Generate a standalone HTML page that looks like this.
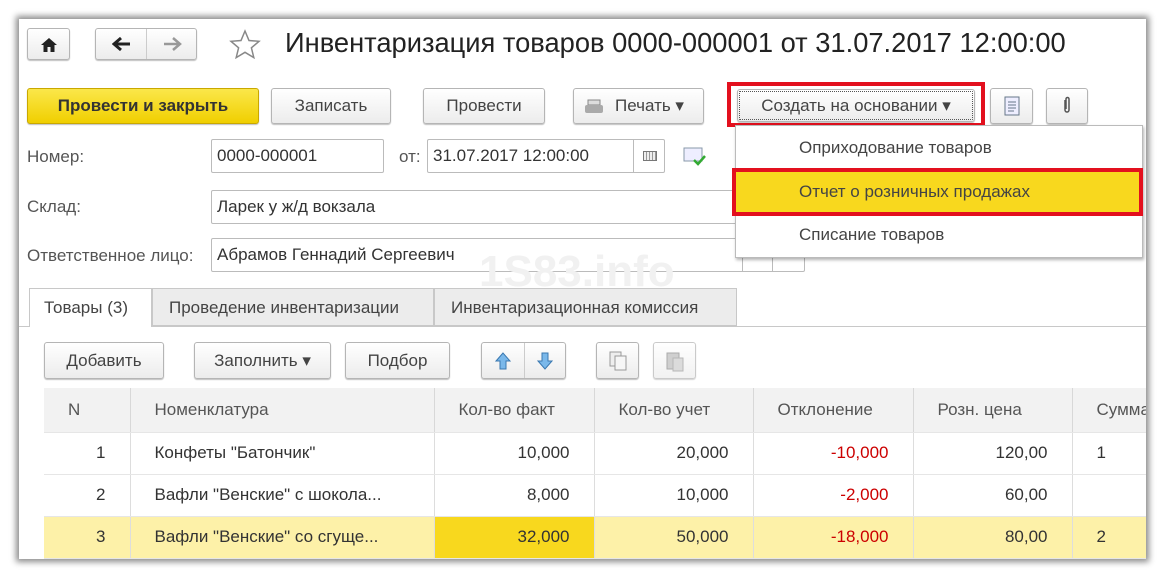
<!DOCTYPE html>
<html><head><meta charset="utf-8"><style>
*{box-sizing:border-box;margin:0;padding:0}
body{width:1165px;height:580px;background:#fff;position:relative;overflow:hidden;font-family:"Liberation Sans",Arial,sans-serif;font-size:17px;color:#333}
.win{position:absolute;left:19px;top:19px;width:1127px;height:540px;background:#fff;box-shadow:0 0 6px 3px rgba(0,0,0,.45);overflow:hidden}
.a{position:absolute}
.btn{position:absolute;border:1px solid #b5b5b5;border-radius:3px;background:linear-gradient(#fff,#ececec);box-shadow:0 1px 1px rgba(0,0,0,.25);text-align:center;color:#444}
.inp{position:absolute;border:1px solid #bbb;border-radius:2px;background:#fff;padding-left:5px;color:#333}
.lbl{position:absolute;color:#555}
table{border-collapse:collapse;position:absolute;left:25px;top:369px;table-layout:fixed;width:1148px}
td{height:42px;border-right:1px solid #ddd;border-bottom:1px solid #e6e6e6;padding:0 24px;white-space:nowrap;overflow:hidden}
tr.h td{background:#f2f2f2;color:#555;border-right:1px solid #d8d8d8;height:44px}
.r{text-align:right}.red{color:#c00}
tr.y td{background:#fdf1a8}
</style></head><body>
<div class="win">
<div class="btn" style="left:8px;top:9px;width:43px;height:32px"><svg width="18" height="16" viewBox="0 0 18 16" style="margin-top:8px"><path d="M9 1L1 8h2.5v7h4v-5h3v5h4V8H17z" fill="#222"/></svg></div>
<div class="btn" style="left:76px;top:9px;width:102px;height:32px"><div class="a" style="left:50px;top:0;width:1px;height:30px;background:#ccc"></div>
<svg class="a" style="left:16px;top:7px" width="20" height="16"><path d="M2 8h16M9 2L2 8l7 6" stroke="#222" stroke-width="3" fill="none"/></svg>
<svg class="a" style="left:66px;top:7px" width="20" height="16"><path d="M2 8h16M11 2l7 6-7 6" stroke="#999" stroke-width="2.5" fill="none"/></svg></div>
<svg class="a" style="left:210px;top:10px" width="32" height="30"><path d="M16 2l4 9.5 10 .8-7.6 6.5 2.4 9.8L16 23.3l-8.8 5.3 2.4-9.8L2 12.3l10-.8z" fill="none" stroke="#888" stroke-width="1.5"/></svg>
<div class="a" style="left:266px;top:8px;font-size:27.3px;color:#222">Инвентаризация товаров 0000-000001 от 31.07.2017 12:00:00</div>
<div class="btn" style="left:8px;top:69px;width:232px;height:36px;background:linear-gradient(#fbe74a,#f0cf00);border-color:#c9a800;color:#333;font-weight:bold;line-height:34px">Провести и закрыть</div>
<div class="btn" style="left:252px;top:69px;width:120px;height:36px;line-height:34px">Записать</div>
<div class="btn" style="left:404px;top:69px;width:122px;height:36px;line-height:34px">Провести</div>
<div class="btn" style="left:554px;top:69px;width:131px;height:36px;line-height:34px;padding-left:22px">Печать ▾<svg class="a" style="left:10px;top:10px" width="20" height="16"><rect x="4" y="1" width="12" height="5" fill="#ddd" stroke="#888"/><rect x="1" y="6" width="18" height="8" rx="2" fill="#aaa"/></svg></div>
<div class="a" style="left:708px;top:63px;width:258px;height:45px;border:4px solid #e3101e"></div>
<div class="btn" style="left:718px;top:70px;width:238px;height:33px;line-height:31px;outline:1px dotted #555;outline-offset:-3px">Создать на основании ▾</div>
<div class="btn" style="left:971px;top:69px;width:43px;height:36px"><svg width="16" height="20" style="margin-top:7px"><rect x="1" y="1" width="14" height="18" fill="#eef" stroke="#678"/><path d="M4 6h8M4 9h8M4 12h8M4 15h6" stroke="#678"/></svg></div>
<div class="btn" style="left:1027px;top:69px;width:42px;height:36px"><svg width="10" height="20" style="margin-top:7px"><path d="M3 4v10a2 2 0 004 0V3a1.3 1.3 0 00-3 0v10" fill="none" stroke="#555" stroke-width="1.5"/></svg></div>
<div class="lbl" style="left:8px;top:128px">Номер:</div>
<div class="inp" style="left:192px;top:120px;width:173px;height:34px;line-height:32px">0000-000001</div>
<div class="lbl" style="left:380px;top:128px">от:</div>
<div class="inp" style="left:408px;top:120px;width:238px;height:34px;line-height:32px">31.07.2017 12:00:00<div class="a" style="left:205px;top:0;width:1px;height:32px;background:#bbb"></div><div class="a" style="left:215px;top:11px;width:14px;height:10px;border:1px solid #777;background:repeating-linear-gradient(90deg,#eee 0 2px,#999 2px 3px)"></div></div>
<svg class="a" style="left:664px;top:128px" width="24" height="20"><rect x="1" y="1" width="18" height="13" fill="#eef" stroke="#89a"/><path d="M11 13l4 4 7-8" stroke="#3a3" stroke-width="2.5" fill="none"/></svg>
<div class="lbl" style="left:8px;top:178px">Склад:</div>
<div class="inp" style="left:192px;top:171px;width:600px;height:34px;line-height:32px">Ларек у ж/д вокзала</div>
<div class="lbl" style="left:8px;top:227px">Ответственное лицо:</div>
<div class="inp" style="left:192px;top:219px;width:594px;height:34px;line-height:32px">Абрамов Геннадий Сергеевич<div class="a" style="left:530px;top:0;width:1px;height:32px;background:#bbb"></div><div class="a" style="left:560px;top:0;width:1px;height:32px;background:#bbb"></div></div>
<div class="a" style="left:460px;top:228px;font-size:44px;font-weight:bold;color:#f1f1f1">1S83.info</div>
<div class="a" style="left:716px;top:106px;width:408px;height:133px;background:#fff;border:1px solid #bbb;box-shadow:1px 2px 3px rgba(0,0,0,.3)">
<div class="a" style="left:63px;top:12px;color:#444">Оприходование товаров</div>
<div class="a" style="left:-4px;top:42px;width:411px;height:48px;border:4px solid #e3101e;background:#f8d81e"><div class="a" style="left:63px;top:10px;color:#444">Отчет о розничных продажах</div></div>
<div class="a" style="left:63px;top:99px;color:#444">Списание товаров</div>
</div>
<div class="a" style="left:0;top:307px;width:1127px;height:1px;background:#c8c8c8"></div>
<div class="a" style="left:10px;top:269px;width:123px;height:39px;border:1px solid #c8c8c8;border-bottom:none;background:#fff;padding:9px 0 0 14px;color:#444">Товары (3)</div>
<div class="a" style="left:133px;top:269px;width:282px;height:38px;border:1px solid #c8c8c8;background:#ececec;padding:9px 0 0 16px;color:#444">Проведение инвентаризации</div>
<div class="a" style="left:415px;top:269px;width:303px;height:38px;border:1px solid #c8c8c8;background:#ececec;padding:9px 0 0 16px;color:#444">Инвентаризационная комиссия</div>
<div class="btn" style="left:25px;top:323px;width:120px;height:37px;line-height:35px">Добавить</div>
<div class="btn" style="left:175px;top:323px;width:137px;height:37px;line-height:35px">Заполнить ▾</div>
<div class="btn" style="left:326px;top:323px;width:105px;height:37px;line-height:35px">Подбор</div>
<div class="btn" style="left:462px;top:323px;width:85px;height:37px"><div class="a" style="left:42px;top:0;width:1px;height:35px;background:#ccc"></div>
<svg class="a" style="left:13px;top:9px" width="16" height="18"><path d="M8 1L1 9h4v8h6V9h4z" fill="#7ab8ea" stroke="#3a78b0"/></svg>
<svg class="a" style="left:55px;top:9px" width="16" height="18"><path d="M8 17L1 9h4V1h6v8h4z" fill="#7ab8ea" stroke="#3a78b0"/></svg></div>
<div class="btn" style="left:577px;top:323px;width:43px;height:37px"><svg width="18" height="20" style="margin-top:8px"><rect x="1" y="1" width="11" height="14" fill="#eee" stroke="#999"/><rect x="6" y="5" width="11" height="14" fill="#f6f6f6" stroke="#999"/></svg></div>
<div class="btn" style="left:634px;top:323px;width:43px;height:37px;opacity:.7"><svg width="18" height="22" style="margin-top:7px"><rect x="1" y="3" width="12" height="16" fill="#bbb" stroke="#888"/><rect x="7" y="8" width="10" height="13" fill="#ccc" stroke="#999"/></svg></div>
<table>
<colgroup><col style="width:86px"><col style="width:304px"><col style="width:160px"><col style="width:159px"><col style="width:160px"><col style="width:159px"><col style="width:120px"></colgroup>
<tr class="h"><td>N</td><td>Номенклатура</td><td>Кол-во факт</td><td>Кол-во учет</td><td>Отклонение</td><td>Розн. цена</td><td>Сумма</td></tr>
<tr><td class="r">1</td><td>Конфеты "Батончик"</td><td class="r">10,000</td><td class="r">20,000</td><td class="r red">-10,000</td><td class="r">120,00</td><td>1</td></tr>
<tr><td class="r">2</td><td>Вафли "Венские" с шокола...</td><td class="r">8,000</td><td class="r">10,000</td><td class="r red">-2,000</td><td class="r">60,00</td><td></td></tr>
<tr class="y"><td class="r">3</td><td>Вафли "Венские" со сгуще...</td><td class="r" style="background:#f8d81e">32,000</td><td class="r">50,000</td><td class="r red">-18,000</td><td class="r">80,00</td><td>2</td></tr>
</table>
</div>
</body></html>
